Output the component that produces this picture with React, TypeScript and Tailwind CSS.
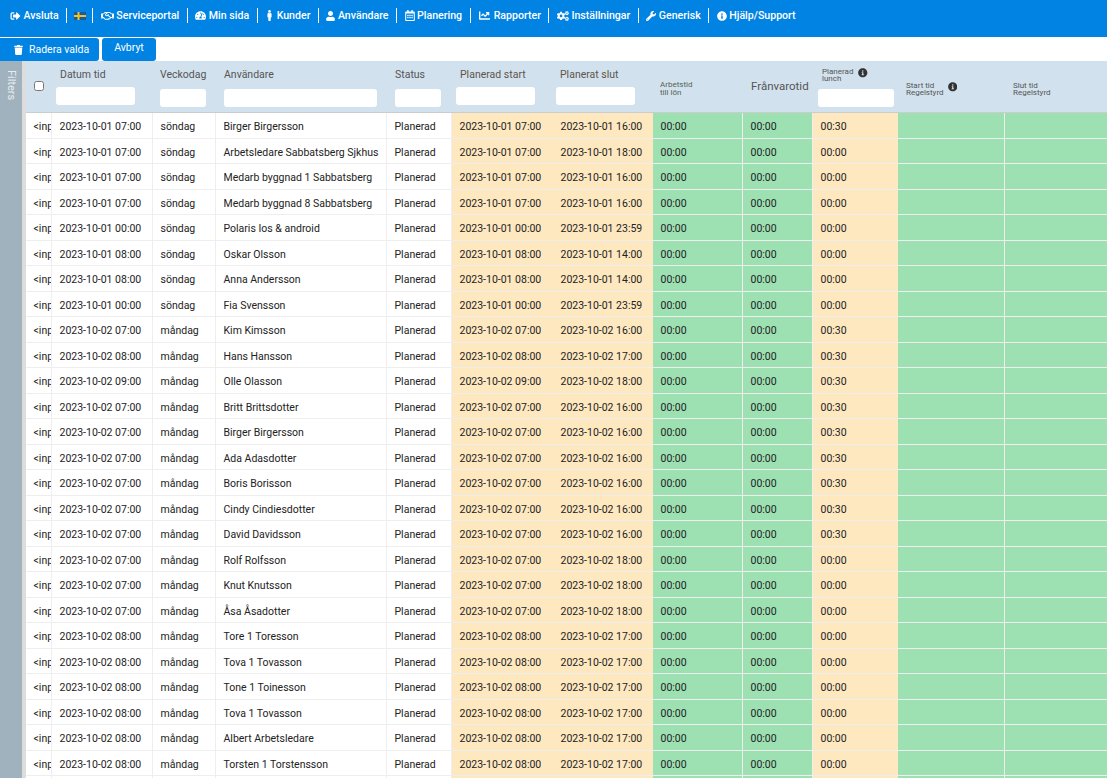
import { FaChartLine, FaCogs, FaInfoCircle, FaMale, FaRegCalendarAlt, FaRegHandshake, FaSignOutAlt, FaTachometerAlt, FaTrash, FaUser, FaWrench } from 'react-icons/fa';

const menu = [
  { label: 'Avsluta', icon: <FaSignOutAlt className="w-[11px] h-[10px]" /> },
  { label: 'flag' },
  { label: 'Serviceportal', icon: <FaRegHandshake className="w-[13px] h-[12px]" /> },
  { label: 'Min sida', icon: <FaTachometerAlt className="w-[11px] h-[11px]" /> },
  { label: 'Kunder', icon: <FaMale className="w-[9px] h-[11px]" /> },
  { label: 'Användare', icon: <FaUser className="w-[9px] h-[10px]" /> },
  { label: 'Planering', icon: <FaRegCalendarAlt className="w-[10px] h-[11px]" /> },
  { label: 'Rapporter', icon: <FaChartLine className="w-[13px] h-[11px]" /> },
  { label: 'Inställningar', icon: <FaCogs className="w-[12px] h-[10px]" /> },
  { label: 'Generisk', icon: <FaWrench className="w-[10px] h-[10px]" /> },
  { label: 'Hjälp/Support', icon: <FaInfoCircle className="w-[10px] h-[10px]" /> },
];

// date, weekday, user, start, end, lunch
const rows: [string, string, string, string, string, string][] = [
  ['2023-10-01 07:00', 'söndag', 'Birger Birgersson', '2023-10-01 07:00', '2023-10-01 16:00', '00:30'],
  ['2023-10-01 07:00', 'söndag', 'Arbetsledare Sabbatsberg Sjkhus', '2023-10-01 07:00', '2023-10-01 18:00', '00:00'],
  ['2023-10-01 07:00', 'söndag', 'Medarb byggnad 1 Sabbatsberg', '2023-10-01 07:00', '2023-10-01 16:00', '00:00'],
  ['2023-10-01 07:00', 'söndag', 'Medarb byggnad 8 Sabbatsberg', '2023-10-01 07:00', '2023-10-01 16:00', '00:00'],
  ['2023-10-01 00:00', 'söndag', 'Polaris Ios & android', '2023-10-01 00:00', '2023-10-01 23:59', '00:00'],
  ['2023-10-01 08:00', 'söndag', 'Oskar Olsson', '2023-10-01 08:00', '2023-10-01 14:00', '00:00'],
  ['2023-10-01 08:00', 'söndag', 'Anna Andersson', '2023-10-01 08:00', '2023-10-01 14:00', '00:00'],
  ['2023-10-01 00:00', 'söndag', 'Fia Svensson', '2023-10-01 00:00', '2023-10-01 23:59', '00:00'],
  ['2023-10-02 07:00', 'måndag', 'Kim Kimsson', '2023-10-02 07:00', '2023-10-02 16:00', '00:30'],
  ['2023-10-02 08:00', 'måndag', 'Hans Hansson', '2023-10-02 08:00', '2023-10-02 17:00', '00:30'],
  ['2023-10-02 09:00', 'måndag', 'Olle Olasson', '2023-10-02 09:00', '2023-10-02 18:00', '00:30'],
  ['2023-10-02 07:00', 'måndag', 'Britt Brittsdotter', '2023-10-02 07:00', '2023-10-02 16:00', '00:30'],
  ['2023-10-02 07:00', 'måndag', 'Birger Birgersson', '2023-10-02 07:00', '2023-10-02 16:00', '00:30'],
  ['2023-10-02 07:00', 'måndag', 'Ada Adasdotter', '2023-10-02 07:00', '2023-10-02 16:00', '00:30'],
  ['2023-10-02 07:00', 'måndag', 'Boris Borisson', '2023-10-02 07:00', '2023-10-02 16:00', '00:30'],
  ['2023-10-02 07:00', 'måndag', 'Cindy Cindiesdotter', '2023-10-02 07:00', '2023-10-02 16:00', '00:30'],
  ['2023-10-02 07:00', 'måndag', 'David Davidsson', '2023-10-02 07:00', '2023-10-02 16:00', '00:30'],
  ['2023-10-02 07:00', 'måndag', 'Rolf Rolfsson', '2023-10-02 07:00', '2023-10-02 18:00', '00:00'],
  ['2023-10-02 07:00', 'måndag', 'Knut Knutsson', '2023-10-02 07:00', '2023-10-02 18:00', '00:00'],
  ['2023-10-02 07:00', 'måndag', 'Åsa Åsadotter', '2023-10-02 07:00', '2023-10-02 18:00', '00:00'],
  ['2023-10-02 08:00', 'måndag', 'Tore 1 Toresson', '2023-10-02 08:00', '2023-10-02 17:00', '00:00'],
  ['2023-10-02 08:00', 'måndag', 'Tova 1 Tovasson', '2023-10-02 08:00', '2023-10-02 17:00', '00:00'],
  ['2023-10-02 08:00', 'måndag', 'Tone 1 Toinesson', '2023-10-02 08:00', '2023-10-02 17:00', '00:00'],
  ['2023-10-02 08:00', 'måndag', 'Tova 1 Tovasson', '2023-10-02 08:00', '2023-10-02 17:00', '00:00'],
  ['2023-10-02 08:00', 'måndag', 'Albert Arbetsledare', '2023-10-02 08:00', '2023-10-02 17:00', '00:00'],
  ['2023-10-02 08:00', 'måndag', 'Torsten 1 Torstensson', '2023-10-02 08:00', '2023-10-02 17:00', '00:00'],
  ['2023-10-02 08:00', 'måndag', 'Tova 1 Tovasson', '2023-10-02 08:00', '2023-10-02 17:00', '00:00'],
];

const cols = 'grid grid-cols-[26px_101px_63px_171px_65px_101px_100px_90px_70px_85px_107px_102px]';
const cell = 'border-r border-[#eeeeee] pl-[7.5px] pt-[3.5px] flex items-center overflow-hidden whitespace-nowrap';

function Flag() {
  return (
    <svg viewBox="0 0 12 8" className="w-[12px] h-[8px] -ml-px -mr-px">
      <rect width="12" height="8" fill="#1b5a9c" />
      <rect x="3.5" width="2" height="8" fill="#eec42a" />
      <rect y="3" width="12" height="2" fill="#eec42a" />
    </svg>
  );
}

function FilterInput({ className }: { className: string }) {
  return <input type="text" className={`bg-white rounded-[3px] h-[18px] block ${className}`} />;
}

export default function App() {
  return (
    <div className="h-[778px] overflow-hidden bg-white font-['Roboto',sans-serif] text-[10.5px] text-[#222222]">
      {/* Top menu */}
      <div className="h-[37px] bg-[#0083e3] flex items-start pt-2 pl-[10px] text-white text-[10.6px] font-medium">
        {menu.map((m, i) => (
          <div
            key={m.label}
            className={`h-[15px] flex items-center gap-[2.5px] ${i > 0 ? 'border-l border-white ml-[7.5px] pl-[7.5px]' : ''}`}
          >
            {m.label === 'flag' ? <Flag /> : <>{m.icon}<span className="pt-px">{m.label}</span></>}
          </div>
        ))}
      </div>

      {/* Action buttons */}
      <div className="h-[24px] flex gap-[3px] pt-[1px] text-white text-[10.5px]">
        <button className="h-[23px] w-[99px] bg-[#0083e3] rounded-r-[3px] flex items-center pl-[14px] gap-[6px]">
          <FaTrash className="w-[9px] h-[10px]" />
          Radera valda
        </button>
        <button className="h-[23px] w-[54px] bg-[#0083e3] rounded-[3px] pb-[3px]">Avbryt</button>
      </div>

      <div className="flex">
        {/* Filters tab */}
        <div className="w-[22px] h-[717px] bg-[#a0b2bd] shrink-0 flex justify-center">
          <span className="[writing-mode:vertical-rl] text-[#e6edf0] text-[11px] mt-[9px]">Filters</span>
        </div>
        <div className="w-[4px] bg-[#dddddd] shrink-0" />

        <div className="flex-1 min-w-0">
          {/* Table header */}
          <div className={`${cols} h-[52px] bg-[#d2e1ee] border-b border-[#cccccc] text-[#555555]`}>
            <div className="flex items-center pl-2 pb-[2px]">
              <input type="checkbox" className="w-[10px] h-[10px] appearance-auto" />
            </div>
            <div className="pt-[6px] pl-[4px]">
              <div className="pl-[4px] h-[18px] leading-[15px]">Datum tid</div>
              <FilterInput className="w-[79px] mt-[2px]" />
            </div>
            <div className="pt-[6px] pl-[7px]">
              <div className="h-[20px] leading-[15px]">Veckodag</div>
              <FilterInput className="w-[46px] mt-[2px]" />
            </div>
            <div className="pt-[6px] pl-2">
              <div className="h-[20px] leading-[15px]">Användare</div>
              <FilterInput className="w-[153px] mt-[2px]" />
            </div>
            <div className="pt-[6px] pl-2">
              <div className="h-[20px] leading-[15px]">Status</div>
              <FilterInput className="w-[46px] mt-[2px]" />
            </div>
            <div className="pt-[6px] pl-[4px]">
              <div className="pl-[4px] h-[18px] leading-[15px] text-[#5f5548]">Planerad start</div>
              <FilterInput className="w-[79px] mt-[2px]" />
            </div>
            <div className="pt-[6px] pl-[3px]">
              <div className="pl-[4px] h-[18px] leading-[15px] text-[#5f5548]">Planerat slut</div>
              <FilterInput className="w-[79px] mt-[2px]" />
            </div>
            <div className="pl-[7px] pt-[20px] text-[8px] leading-[8px] text-[#566350]">Arbetstid<br />till lön</div>
            <div className="pl-2 pt-[18px] text-[11.5px] leading-[15px]">Frånvarotid</div>
            <div className="pl-[5px] pt-[7px]">
              <div className="flex gap-[5px] h-[21px] pl-[4px] text-[8px] leading-[7px]">
                <span>Planerad<br />lunch</span>
                <FaInfoCircle className="w-[9.5px] h-[9.5px] text-[#333333]" />
              </div>
              <FilterInput className="w-[76px]" />
            </div>
            <div className="pl-2 pt-[21px] flex gap-[4px] text-[8px] leading-[7px]">
              <span>Start tid<br />Regelstyrd</span>
              <FaInfoCircle className="w-[9.5px] h-[9.5px] text-[#333333]" />
            </div>
            <div className="pl-2 pt-[21px] text-[8px] leading-[7px]">Slut tid<br />Regelstyrd</div>
          </div>

          {/* Rows */}
          {rows.map((r, i) => (
            <div key={i} className={`${cols} h-[25.5px] border-b border-[#eeeeee]`}>
              <div className={cell}>&lt;input</div>
              <div className={cell}>{r[0]}</div>
              <div className={cell}>{r[1]}</div>
              <div className={cell}>{r[2]}</div>
              <div className={cell}>Planerad</div>
              <div className={`${cell} bg-[#fee8c0] border-[#fee8c0]`}>{r[3]}</div>
              <div className={`${cell} bg-[#fee8c0] border-[#fee8c0]`}>{r[4]}</div>
              <div className={`${cell} bg-[#9de0b2]`}>00:00</div>
              <div className={`${cell} bg-[#9de0b2] border-[#9de0b2]`}>00:00</div>
              <div className={`${cell} bg-[#fee8c0] border-[#fee8c0]`}>{r[5]}</div>
              <div className={`${cell} bg-[#9de0b2]`} />
              <div className="bg-[#9de0b2]" />
            </div>
          ))}
        </div>
      </div>
    </div>
  );
}
